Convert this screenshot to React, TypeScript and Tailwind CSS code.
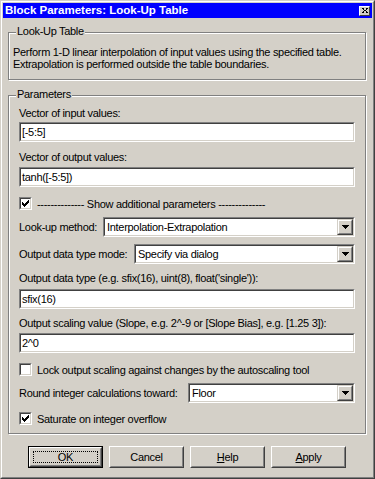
import React from "react";

const FONT = { fontFamily: '"Liberation Sans", Arial, sans-serif' };

function Sunken({ className = "", children }: { className?: string; children?: React.ReactNode }) {
  return (
    <div className={`border border-t-[#808080] border-l-[#808080] border-b-white border-r-white ${className}`}>
      <div className="h-full border border-t-[#404040] border-l-[#404040] border-b-[#d4d0c8] border-r-[#d4d0c8] bg-white">
        {children}
      </div>
    </div>
  );
}

function Raised({ className = "", children }: { className?: string; children?: React.ReactNode }) {
  return (
    <div className={`border border-t-[#d4d0c8] border-l-[#d4d0c8] border-b-[#404040] border-r-[#404040] ${className}`}>
      <div className="h-full border border-t-white border-l-white border-b-[#808080] border-r-[#808080] bg-[#d4d0c8] flex items-center justify-center">
        {children}
      </div>
    </div>
  );
}

function TextField({ value }: { value: string }) {
  return (
    <Sunken className="h-[20px] w-full">
      <div className="h-full flex items-center pl-[1px] whitespace-nowrap">{value}</div>
    </Sunken>
  );
}

function Arrow() {
  return (
    <svg width="7" height="4" viewBox="0 0 7 4" shapeRendering="crispEdges">
      <path d="M0 0h7v1h-7z M1 1h5v1h-5z M2 2h3v1h-3z M3 3h1v1h-1z" fill="black" />
    </svg>
  );
}

function Dropdown({ value, width }: { value: string; width: string }) {
  return (
    <Sunken className={`h-[20px] ${width}`}>
      <div className="h-full flex items-center">
        <div className="flex-1 pl-[2px] whitespace-nowrap">{value}</div>
        <Raised className="w-[16px] h-[16px]">
          <Arrow />
        </Raised>
      </div>
    </Sunken>
  );
}

function Check() {
  return (
    <svg width="7" height="7" viewBox="0 0 7 7" shapeRendering="crispEdges">
      <path
        d="M6 0h1v1h-1z M5 1h2v1h-2z M0 2h1v1h-1z M4 2h3v1h-3z M0 3h2v1h-2z M3 3h3v1h-3z M0 4h5v1h-5z M1 5h3v1h-3z M2 6h1v1h-1z"
        fill="black"
      />
    </svg>
  );
}

function CheckRow({ checked, label }: { checked: boolean; label: string }) {
  return (
    <div className="flex items-center h-[13px]">
      <Sunken className="w-[13px] h-[13px]">
        <div className="h-full flex items-center justify-center">{checked ? <Check /> : null}</div>
      </Sunken>
      <span className="ml-[5px] whitespace-nowrap">{label}</span>
    </div>
  );
}

function GroupBox({
  legend,
  className = "",
  children,
}: {
  legend: string;
  className?: string;
  children?: React.ReactNode;
}) {
  return (
    <div className={`relative border border-[#808080] shadow-[inset_1px_1px_0_#fff,1px_1px_0_#fff] ${className}`}>
      <span className="absolute left-[7px] top-[-8px] px-[1px] bg-[#d4d0c8] leading-[12px] whitespace-nowrap">
        {legend}
      </span>
      {children}
    </div>
  );
}

function PushButton({ children, isDefault = false }: { children: React.ReactNode; isDefault?: boolean }) {
  if (isDefault) {
    return (
      <div className="w-[75px] h-[22px] border border-black">
        <div className="h-full border border-t-white border-l-white border-b-[#404040] border-r-[#404040]">
          <div className="h-full border border-t-[#d4d0c8] border-l-[#d4d0c8] border-b-[#808080] border-r-[#808080] p-[2px]">
            <div className="h-full border border-dotted border-black flex items-center justify-center">
              {children}
            </div>
          </div>
        </div>
      </div>
    );
  }
  return (
    <div className="w-[75px] h-[22px] border border-t-white border-l-white border-b-[#404040] border-r-[#404040]">
      <div className="h-full border border-t-[#d4d0c8] border-l-[#d4d0c8] border-b-[#808080] border-r-[#808080] flex items-center justify-center">
        {children}
      </div>
    </div>
  );
}

export default function App() {
  return (
    <div
      className="w-[375px] h-[479px] bg-[#d4d0c8] text-black text-[11px] leading-[12px] tracking-[-0.3px] border border-t-[#d4d0c8] border-l-[#d4d0c8] border-b-[#404040] border-r-[#404040]"
      style={FONT}
    >
      <div className="h-full border border-t-white border-l-white border-b-[#808080] border-r-[#808080] p-[1px] flex flex-col">
        {/* Title bar */}
        <div className="h-[15px] bg-[#0000ff] flex items-center justify-between pl-[2px] pr-[2px]">
          <span className="text-white font-bold text-[11.5px] tracking-normal whitespace-nowrap leading-[15px]">
            Block Parameters: Look-Up Table
          </span>
          <div className="w-[11px] h-[10px] border border-t-white border-l-white border-b-[#404040] border-r-[#404040] bg-[#d4d0c8] flex items-center justify-center">
            <svg width="6" height="5" viewBox="0 0 6 5" shapeRendering="crispEdges">
              <path
                d="M0 0h2v1h-2z M4 0h2v1h-2z M1 1h1v1h-1z M4 1h1v1h-1z M2 2h2v1h-2z M1 3h1v1h-1z M4 3h1v1h-1z M0 4h2v1h-2z M4 4h2v1h-2z"
                fill="black"
              />
            </svg>
          </div>
        </div>

        {/* Body */}
        <div className="flex flex-col pl-[5px] pr-[6px]">
          <GroupBox legend="Look-Up Table" className="mt-[14px] h-[48px]">
            <div className="pl-[4px] pt-[13px]">
              <div className="whitespace-nowrap">Perform 1-D linear interpolation of input values using the specified table.</div>
              <div className="whitespace-nowrap">Extrapolation is performed outside the table boundaries.</div>
            </div>
          </GroupBox>

          <GroupBox legend="Parameters" className="mt-[15px] h-[339px]">
            <div className="px-[10px] pt-[11px] flex flex-col">
              <div className="whitespace-nowrap">Vector of input values:</div>
              <div className="mt-[3px]">
                <TextField value="[-5:5]" />
              </div>
              <div className="mt-[9px] whitespace-nowrap">Vector of output values:</div>
              <div className="mt-[4px]">
                <TextField value="tanh([-5:5])" />
              </div>
              <div className="mt-[10px]">
                <CheckRow checked={true} label="-------------- Show additional parameters --------------" />
              </div>
              <div className="mt-[7px] flex items-center justify-between">
                <span className="whitespace-nowrap">Look-up method:</span>
                <Dropdown value="Interpolation-Extrapolation" width="w-[252px]" />
              </div>
              <div className="mt-[7px] flex items-center justify-between">
                <span className="whitespace-nowrap">Output data type mode:</span>
                <Dropdown value="Specify via dialog" width="w-[221px]" />
              </div>
              <div className="mt-[8px] whitespace-nowrap">Output data type (e.g. sfix(16), uint(8), float('single')):</div>
              <div className="mt-[5px]">
                <TextField value="sfix(16)" />
              </div>
              <div className="mt-[8px] whitespace-nowrap">
                Output scaling value (Slope, e.g. 2^-9 or [Slope Bias], e.g. [1.25 3]):
              </div>
              <div className="mt-[4px]">
                <TextField value="2^0" />
              </div>
              <div className="mt-[10px]">
                <CheckRow checked={false} label="Lock output scaling against changes by the autoscaling tool" />
              </div>
              <div className="mt-[7px] flex items-center justify-between">
                <span className="whitespace-nowrap">Round integer calculations toward:</span>
                <Dropdown value="Floor" width="w-[167px]" />
              </div>
              <div className="mt-[9px]">
                <CheckRow checked={true} label="Saturate on integer overflow" />
              </div>
            </div>
          </GroupBox>

          <div className="mt-[12px] flex justify-center gap-[6px]">
            <PushButton isDefault>OK</PushButton>
            <PushButton>Cancel</PushButton>
            <PushButton>
              <span>
                <span className="underline">H</span>elp
              </span>
            </PushButton>
            <PushButton>
              <span>
                <span className="underline">A</span>pply
              </span>
            </PushButton>
          </div>
        </div>
      </div>
    </div>
  );
}
